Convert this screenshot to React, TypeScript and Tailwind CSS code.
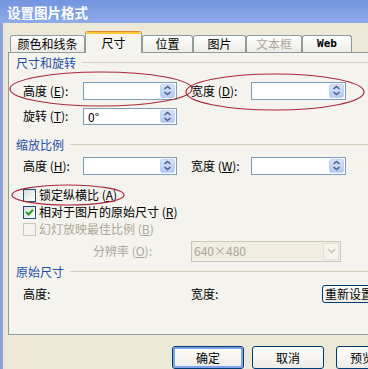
import React from "react";

const FONT = { fontFamily: '"Noto Sans CJK SC", "Liberation Sans", sans-serif' };

function Spin() {
  return (
    <div className="absolute right-[1px] top-[1px] bottom-[1px] w-[15px] rounded-[2px] bg-linear-to-b from-[#d6e2fb] to-[#b4c8f2] border border-[#c3d3f7] flex items-center justify-center">
      <svg width="9" height="11" viewBox="0 0 9 11">
        <path d="M1.5 4 L4.5 1.5 L7.5 4" fill="none" stroke="#4d6185" strokeWidth="1.6" />
        <path d="M1.5 7 L4.5 9.5 L7.5 7" fill="none" stroke="#4d6185" strokeWidth="1.6" />
      </svg>
    </div>
  );
}

function Input({ w, value }: { w: string; value?: string }) {
  return (
    <div className={`relative h-full ${w} border border-[#7f9db9] bg-white`}>
      {value && <span className="absolute left-[4px] top-0 leading-[16px]">{value}</span>}
      <Spin />
    </div>
  );
}

function Label({ main, k, w = "w-[60px]" }: { main: string; k: string; w?: string }) {
  return (
    <div className={`${w} shrink-0 whitespace-nowrap`}>
      {main} (<span className="underline">{k}</span>):
    </div>
  );
}

function SectionTitle({ text, cls }: { text: string; cls: string }) {
  return (
    <div className={`flex items-center pl-[7px] ${cls}`}>
      <span className="text-[#1d4fa6] whitespace-nowrap">{text}</span>
      <div className="ml-[6px] flex-1 h-px bg-[#d0d0bf]" />
    </div>
  );
}

function Checkbox({ checked, disabled }: { checked?: boolean; disabled?: boolean }) {
  return (
    <div
      className={`w-[13px] h-[13px] shrink-0 border flex items-center justify-center ${
        disabled ? "border-[#cac8bb] bg-[#f4f3ee]" : "border-[#1c5180] bg-linear-to-br from-[#dcdcd7] to-white"
      }`}
    >
      {checked && (
        <svg width="9" height="9" viewBox="0 0 9 9">
          <path d="M1 4 L3.5 6.5 L8 1.8" fill="none" stroke="#21a121" strokeWidth="2" />
        </svg>
      )}
    </div>
  );
}

function Tab({ label, w, active, disabled, web }: { label: string; w: string; active?: boolean; disabled?: boolean; web?: boolean }) {
  if (active) {
    return (
      <div className={`${w} h-[22px] -mb-px relative z-10 flex flex-col bg-[#f4f3ee] border-x border-[#919b9c] rounded-t-[3px] overflow-hidden`}>
        <div className="h-[1px] bg-[#e68b2c]" />
        <div className="h-[2px] bg-[#ffc73c]" />
        <div className="flex-1 flex items-center justify-center pb-[1px]">{label}</div>
      </div>
    );
  }
  return (
    <div
      className={`${w} h-[17px] border border-b-0 border-[#919b9c] rounded-t-[3px] bg-linear-to-b from-white to-[#ecebe6] flex items-center justify-center ${
        disabled ? "text-[#aca899]" : ""
      }`}
    >
      {web ? <span className="font-bold text-[11px]" style={{ fontFamily: '"DejaVu Sans Mono", monospace' }}>Web</span> : label}
    </div>
  );
}

function Button({ label, cls, def, left }: { label: string; cls?: string; def?: boolean; left?: boolean }) {
  return (
    <div
      className={`w-[72px] h-[23px] shrink-0 rounded-[3px] border border-[#003c74] bg-linear-to-b from-white to-[#ecebe6] flex items-center ${
        left ? "justify-start pl-[13px]" : "justify-center"
      } ${def ? "shadow-[inset_0_0_0_2px_#7fa2e8]" : ""} ${cls ?? ""}`}
    >
      {label}
    </div>
  );
}

export default function App() {
  return (
    <div className="relative w-[368px] h-[369px] overflow-hidden bg-[#ece9d8] text-[12px] leading-[16px] text-black" style={FONT}>
      {/* title bar */}
      <div className="h-[23px] bg-linear-to-b from-[#7395df] to-[#8eabe9] flex items-center pl-[7px]">
        <span className="text-white font-bold text-[13.5px]">设置图片格式</span>
      </div>
      <div className="flex h-[346px]">
        <div className="w-[3px] bg-[#8aa3dc] shrink-0" />
        <div className="flex-1 flex flex-col">
          {/* tabs */}
          <div className="flex items-end h-[29px] pl-[7px]">
            <Tab label="颜色和线条" w="w-[75px]" />
            <Tab label="尺寸" w="w-[57px]" active />
            <Tab label="位置" w="w-[51px]" />
            <Tab label="图片" w="w-[53px]" />
            <Tab label="文本框" w="w-[56px]" disabled />
            <Tab label="Web" w="w-[50px]" web />
          </div>
          {/* panel */}
          <div className="ml-[5px] w-[380px] h-[287px] border border-[#919b9c] bg-[#f4f3ee] flex flex-col">
            <SectionTitle text="尺寸和旋转" cls="h-[20px]" />
            <div className="mt-[9px] h-[18px] flex items-center pl-[14px]">
              <Label main="高度" k="E" />
              <Input w="w-[94px]" />
              <div className="w-[14px]" />
              <Label main="宽度" k="D" />
              <Input w="w-[95px]" />
            </div>
            <div className="mt-[8px] h-[17px] flex items-center pl-[14px]">
              <Label main="旋转" k="T" />
              <Input w="w-[94px]" value="0°" />
            </div>
            <SectionTitle text="缩放比例" cls="mt-[12px] h-[16px]" />
            <div className="mt-[4px] h-[18px] flex items-center pl-[14px]">
              <Label main="高度" k="H" />
              <Input w="w-[94px]" />
              <div className="w-[14px]" />
              <Label main="宽度" k="W" />
              <Input w="w-[95px]" />
            </div>
            <div className="mt-[12px] h-[17px] flex items-center pl-[14px] gap-[3px]">
              <Checkbox />
              <span>锁定纵横比 (<span className="underline">A</span>)</span>
            </div>
            <div className="h-[17px] flex items-center pl-[14px] gap-[3px]">
              <Checkbox checked />
              <span>相对于图片的原始尺寸 (<span className="underline">R</span>)</span>
            </div>
            <div className="h-[17px] flex items-center pl-[14px] gap-[3px] text-[#aca899]">
              <Checkbox disabled />
              <span>幻灯放映最佳比例 (<span className="underline">B</span>)</span>
            </div>
            <div className="mt-[3px] h-[21px] flex items-center pl-[14px]">
              <div className="w-[129px] text-right text-[#aca899] whitespace-nowrap">
                分辨率 (<span className="underline">O</span>):
              </div>
              <div className="ml-[39px] w-[150px] h-full border border-[#c9c7ba] bg-[#f1ede0] flex items-center">
                <span className="flex-1 pl-[2px] text-[#aca899]">640×480</span>
                <div className="w-[16px] h-[17px] mr-[1px] border border-[#e3e1d6] bg-[#f4f3ee] flex items-center justify-center">
                  <svg width="9" height="6" viewBox="0 0 9 6">
                    <path d="M1 1 L4.5 4.5 L8 1" fill="none" stroke="#c9c7ba" strokeWidth="1.6" />
                  </svg>
                </div>
              </div>
            </div>
            <SectionTitle text="原始尺寸" cls="mt-[2px] h-[16px]" />
            <div className="mt-[5px] h-[18px] flex items-center pl-[14px]">
              <div className="w-[168px]">高度:</div>
              <div className="w-[131px]">宽度:</div>
              <div className="h-[18px] px-[2px] rounded-[3px] border border-[#003c74] bg-linear-to-b from-white to-[#ecebe6] flex items-center whitespace-nowrap">
                重新设置
              </div>
            </div>
          </div>
          {/* bottom buttons */}
          <div className="mt-[11px] flex pl-[169px]">
            <Button label="确定" def />
            <Button label="取消" cls="ml-[8px]" />
            <Button label="预览" cls="ml-[12px]" left />
          </div>
        </div>
      </div>
      {/* red annotation ellipses */}
      <svg className="absolute left-0 top-0 pointer-events-none" width="368" height="369" viewBox="0 0 368 369">
        <ellipse cx="101" cy="89" rx="91" ry="17" fill="none" stroke="#a8283a" strokeWidth="1.2" />
        <ellipse cx="275" cy="92" rx="89" ry="18" fill="none" stroke="#a8283a" strokeWidth="1.2" />
        <ellipse cx="68" cy="195" rx="56" ry="10" fill="none" stroke="#a8283a" strokeWidth="1.2" />
      </svg>
    </div>
  );
}
